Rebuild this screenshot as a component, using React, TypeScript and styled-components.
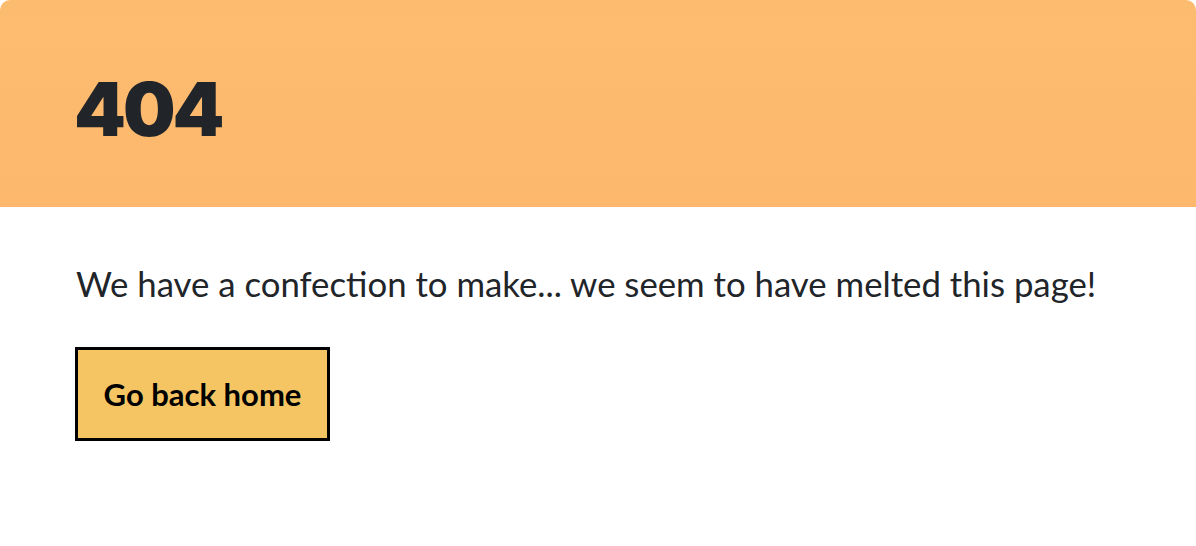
import React from "react";
import styled, { createGlobalStyle } from "styled-components";

const Global = createGlobalStyle`
  html, body { margin: 0; padding: 0; background: #ffffff; }
  body { font-family: "Lato", "Noto Sans", sans-serif; color: #212529; }
`;

const Card = styled.div`
  width: 1196px;
  height: 546px;
  display: flex;
  flex-direction: column;
  background: #ffffff;
`;

const Header = styled.header`
  height: 207px;
  box-sizing: border-box;
  padding: 72px 76px 0;
  background: linear-gradient(180deg, #fcbc70 0%, #fdb86d 100%);
  border-radius: 10px 10px 0 0;
`;

const Code = styled.h1`
  margin: 0 0 0 -2px;
  font-family: "Inter", "Lato", sans-serif;
  font-weight: 900;
  font-size: 74px;
  line-height: 74px;
  letter-spacing: -3px;
  color: #212529;
`;

const Body = styled.main`
  padding: 55px 76px 0;
  display: flex;
  flex-direction: column;
  align-items: flex-start;
  gap: 41px;
`;

const Message = styled.p`
  margin: 0;
  font-size: 34.75px;
  line-height: 44px;
  font-weight: 400;
  color: #212529;
`;

const HomeButton = styled.a`
  display: flex;
  align-items: center;
  justify-content: center;
  box-sizing: border-box;
  width: 255px;
  height: 94px;
  margin-left: -1px;
  background: #f5c563;
  border: 3px solid #000000;
  color: #000000;
  font-size: 31px;
  font-weight: 700;
  text-decoration: none;
`;

export default function App() {
  return (
    <>
      <Global />
      <Card>
        <Header>
          <Code>404</Code>
        </Header>
        <Body>
          <Message>We have a confection to make... we seem to have melted this page!</Message>
          <HomeButton href="#">Go back home</HomeButton>
        </Body>
      </Card>
    </>
  );
}
